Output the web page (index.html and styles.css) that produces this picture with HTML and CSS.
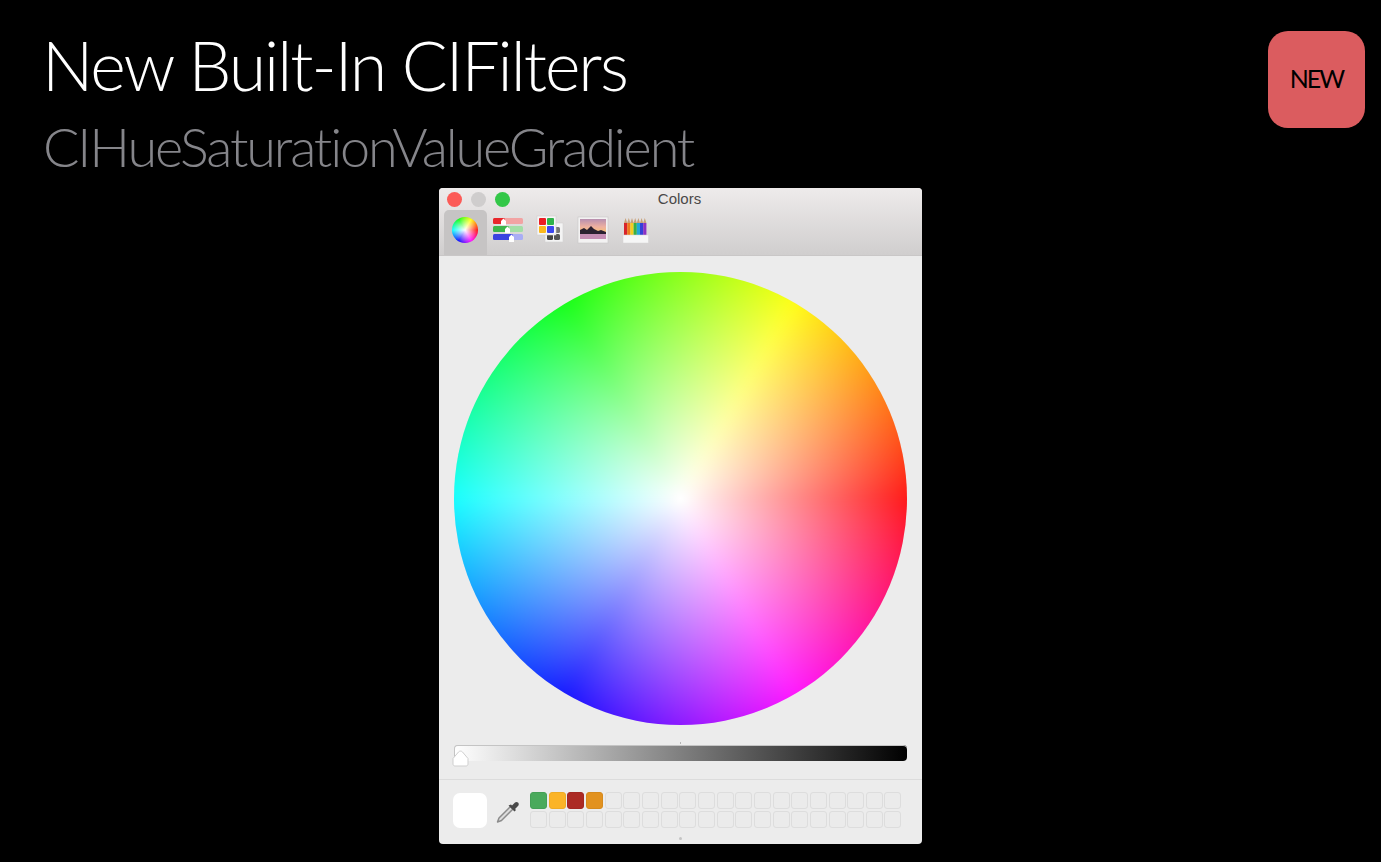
FILE: index.html
```html
<!DOCTYPE html>
<html lang="en">
<head>
    <meta charset="UTF-8">
    <meta name="viewport" content="width=device-width, initial-scale=1.0">
    <title>New Built-In CIFilters</title>
    <link rel="stylesheet" href="styles.css">
</head>
<body>
    <header class="slide-head">
        <div class="titles">
            <h1>New Built-In CIFilters</h1>
            <h2>CIHueSaturationValueGradient</h2>
        </div>
        <div class="badge">NEW</div>
    </header>

    <div class="window">
        <div class="chrome">
            <div class="titlebar">
                <span class="light red"></span>
                <span class="light grey"></span>
                <span class="light green"></span>
                <span class="win-title">Colors</span>
            </div>
            <div class="toolbar">
                <div class="tool active"><div class="mini-wheel"></div></div>
                <div class="tool">
                    <svg width="32" height="26" viewBox="0 0 32 26">
                        <rect x="1" y="1" width="30" height="6" rx="1.5" fill="#f2a3a3"/>
                        <rect x="1" y="1" width="12" height="6" rx="1.5" fill="#e8262b"/>
                        <rect x="1" y="9" width="30" height="6" rx="1.5" fill="#a3dfa6"/>
                        <rect x="1" y="9" width="16" height="6" rx="1.5" fill="#3cb64b"/>
                        <rect x="1" y="17" width="30" height="6" rx="1.5" fill="#a9adf5"/>
                        <rect x="1" y="17" width="20" height="6" rx="1.5" fill="#3b43e0"/>
                        <path d="M9 4l2.500-2.500L14 4v4H9zM13 12l2.500-2.500L18 12v4h-5zM17 20l2.500-2.500L22 20v5h-5z" fill="#fff"/>
                    </svg>
                </div>
                <div class="tool">
                    <svg width="30" height="30" viewBox="0 0 30 30">
                        <rect x="9" y="8" width="18" height="19" fill="#f4f4f4" stroke="#d4d2d2" stroke-width=".6"/>
                        <rect x="11" y="19" width="6" height="6" rx="1.5" fill="#444"/>
                        <rect x="18" y="19" width="6" height="6" rx="1.5" fill="#555"/>
                        <rect x="18" y="12" width="6" height="6" rx="1.5" fill="#777"/>
                        <rect x="1" y="1" width="19" height="19" fill="#f6f6f6" stroke="#d0cece" stroke-width=".6"/>
                        <rect x="3" y="3" width="7" height="7" rx="1" fill="#ea1c24"/>
                        <rect x="11" y="3" width="7" height="7" rx="1" fill="#2fb24a"/>
                        <rect x="3" y="11" width="7" height="7" rx="1" fill="#fbb81c"/>
                        <rect x="11" y="11" width="7" height="7" rx="1" fill="#3c47ee"/>
                    </svg>
                </div>
                <div class="tool">
                    <svg width="32" height="28" viewBox="0 0 32 28">
                        <defs>
                            <linearGradient id="sky" x1="0" y1="0" x2="0" y2="1">
                                <stop offset="0" stop-color="#b78fb0"/>
                                <stop offset=".6" stop-color="#eeb0a0"/>
                                <stop offset="1" stop-color="#f4c07a"/>
                            </linearGradient>
                        </defs>
                        <rect x="1" y="1" width="30" height="26" fill="#f3f2f2" stroke="#c8c6c6" stroke-width=".6"/>
                        <rect x="3" y="3" width="26" height="13" fill="url(#sky)"/>
                        <rect x="3" y="16" width="26" height="7" fill="#c58db4"/>
                        <path d="M3 18v-4l4-2 3 2 4-4 3 3 4 2 3-1 5 2v2z" fill="#2b2030"/>
                    </svg>
                </div>
                <div class="tool">
                    <svg width="28" height="28" viewBox="0 0 28 28">
                        <rect x="2" y="7" width="3.2" height="12" fill="#d8242a"/>
                        <rect x="5.2" y="7" width="3.2" height="12" fill="#ee7a1c"/>
                        <rect x="8.4" y="7" width="3.2" height="12" fill="#f4cd20"/>
                        <rect x="11.6" y="7" width="3.2" height="12" fill="#38b044"/>
                        <rect x="14.8" y="7" width="3.2" height="12" fill="#20a8d8"/>
                        <rect x="18" y="7" width="3.2" height="12" fill="#3440d8"/>
                        <rect x="21.2" y="7" width="3.2" height="12" fill="#8c30c4"/>
                        <path d="M2 7l1.600-5 1.600 5zM5.200 7l1.600-5 1.600 5zM8.400 7L10 2l1.600 5zM11.600 7l1.600-5 1.600 5zM14.800 7l1.600-5L18 7zM18 7l1.600-5 1.600 5zM21.200 7l1.600-5 1.600 5z" fill="#c8a078"/>
                        <rect x="1" y="19" width="25.500" height="8" fill="#f6f6f6" stroke="#d6d4d4" stroke-width=".5"/>
                    </svg>
                </div>
            </div>
        </div>

        <div class="wheel-area">
            <div class="wheel"></div>
            <div class="slider-wrap">
                <div class="slider-tick"></div>
                <div class="slider"></div>
                <svg class="thumb" width="17" height="17" viewBox="0 0 17 17">
                    <path d="M1 8.500L6.500 2c1-1.200 3-1.200 4 0L16 8.500V14c0 1.200-.8 2-2 2H3c-1.200 0-2-.8-2-2z" fill="#fff" stroke="#cfcfcf"/>
                </svg>
            </div>
        </div>

        <div class="tray">
            <div class="current"></div>
            <svg class="dropper" width="24" height="24" viewBox="0 0 24 24">
                <path d="M14.500 6.500L3 18l-1.500 4 4-1.500L17 9z" fill="#dcdcdc" stroke="#8c8c8c" stroke-width="1.500" stroke-linejoin="round"/>
                <path d="M12.500 5.500l6 6 1.500-1.500-1-1 3-3c1-1 1-2.700 0-3.500s-2.200-.8-3 0l-3 3-1-1z" fill="#4a4a4a"/>
            </svg>
            <div class="swatches">
                <div class="swatch s-green"></div><div class="swatch s-yellow"></div><div class="swatch s-red"></div><div class="swatch s-orange"></div>
                <div class="swatch"></div><div class="swatch"></div><div class="swatch"></div><div class="swatch"></div>
                <div class="swatch"></div><div class="swatch"></div><div class="swatch"></div><div class="swatch"></div>
                <div class="swatch"></div><div class="swatch"></div><div class="swatch"></div><div class="swatch"></div>
                <div class="swatch"></div><div class="swatch"></div><div class="swatch"></div><div class="swatch"></div>
                <div class="swatch"></div><div class="swatch"></div><div class="swatch"></div><div class="swatch"></div>
                <div class="swatch"></div><div class="swatch"></div><div class="swatch"></div><div class="swatch"></div>
                <div class="swatch"></div><div class="swatch"></div><div class="swatch"></div><div class="swatch"></div>
                <div class="swatch"></div><div class="swatch"></div><div class="swatch"></div><div class="swatch"></div>
                <div class="swatch"></div><div class="swatch"></div><div class="swatch"></div><div class="swatch"></div>
            </div>
            <div class="grip"></div>
        </div>
    </div>
</body>
</html>
```

FILE: styles.css
```css
html, body {
    height: 100%;
}
body {
    margin: 0;
    background: #000;
    overflow: hidden;
    font-family: Lato, "Open Sans", Arial, sans-serif;
}

/* slide heading */
.slide-head {
    display: flex;
    justify-content: space-between;
    height: 188px;
    padding: 0 16px 0 42px;
    box-sizing: border-box;
}
h1 {
    margin: 24px 0 0;
    font-size: 68px;
    font-weight: 300;
    line-height: 82px;
    letter-spacing: -2px;
    color: #fff;
}
h2 {
    margin: 9px 0 0;
    padding-left: 1px;
    font-size: 54px;
    font-weight: 300;
    line-height: 64px;
    letter-spacing: -2.15px;
    color: #85858a;
}
.badge {
    display: flex;
    align-items: center;
    justify-content: center;
    width: 97px;
    height: 97px;
    margin-top: 31px;
    padding-bottom: 3px;
    box-sizing: border-box;
    border-radius: 20px;
    background: #db5c5f;
    color: #000;
    font-size: 25px;
    letter-spacing: -2px;
}

/* colors window */
.window {
    width: 483px;
    height: 656px;
    margin-left: 439px;
    border-radius: 4px;
    background: #ececec;
    overflow: hidden;
}
.chrome {
    height: 68px;
    background: linear-gradient(#eeebeb, #d0cece);
    border-bottom: 1px solid #c9c7c7;
    box-sizing: border-box;
}
.titlebar {
    position: relative;
    display: flex;
    align-items: center;
    gap: 9px;
    height: 22px;
    padding-left: 8px;
}
.light {
    width: 15px;
    height: 15px;
    border-radius: 50%;
}
.red { background: #fc5b57; }
.grey { background: #cfcdcd; }
.green { background: #33c748; }
.win-title {
    position: absolute;
    top: 2px;
    left: 0;
    right: 2px;
    text-align: center;
    font-family: "Liberation Sans", Arial, sans-serif;
    font-size: 15px;
    line-height: 18px;
    color: #4a4848;
}
.toolbar {
    display: flex;
    height: 45px;
    padding-left: 5px;
}
.tool {
    display: flex;
    align-items: center;
    justify-content: center;
    flex: 0 0 42.7px;
    padding-bottom: 5px;
    box-sizing: border-box;
    filter: blur(0.4px);
}
.tool.active {
    background: #c6c4c4;
    border-radius: 5px 5px 0 0;
    filter: none;
}
.mini-wheel {
    width: 26px;
    height: 26px;
    border-radius: 50%;
    background:
        radial-gradient(circle closest-side, #fff, rgba(255,255,255,.05)),
        conic-gradient(from -30deg, #00ff00 0deg, #ffff00 60deg, #ff0000 120deg, #ff00ff 180deg, #0000ff 240deg, #00ffff 300deg, #00ff00 360deg);
}

.wheel-area {
    position: relative;
    height: 524px;
    padding: 16px 15px 0;
    box-sizing: border-box;
    border-bottom: 1px solid #dcdcdc;
}
/* hues sit 60deg apart with yellow at 30deg; the hue layer is blurred so
   the rays soften, and the white layer fades out towards the rim */
.wheel {
    position: relative;
    width: 453px;
    height: 453px;
    border-radius: 50%;
    overflow: hidden;
}
.wheel::before {
    content: "";
    position: absolute;
    inset: -30px;
    background: conic-gradient(from -30deg, #00ff00 0deg, #ffff00 60deg, #ff0000 120deg, #ff00ff 180deg, #0000ff 240deg, #00ffff 300deg, #00ff00 360deg);
    filter: blur(7px);
}
.wheel::after {
    content: "";
    position: absolute;
    inset: 0;
    background: radial-gradient(circle closest-side, #fff, rgba(255,255,255,.1));
}
.slider-wrap {
    position: relative;
    margin-top: 20px;
}
.slider-tick {
    position: absolute;
    left: 226px;
    top: -3px;
    width: 1px;
    height: 2px;
    background: #b5b5b5;
}
.slider {
    height: 16px;
    border-radius: 4px;
    box-shadow: inset 0 1px 0 #c4c4c4, inset 1px 0 0 #c4c4c4;
    background: linear-gradient(to right, #fff, #000);
}
.thumb {
    position: absolute;
    left: -2px;
    top: 5px;
}

.tray {
    position: relative;
    display: flex;
    align-items: flex-start;
    height: 64px;
    padding: 12px 0 0 14px;
    box-sizing: border-box;
}
.current {
    width: 34px;
    height: 35px;
    margin-top: 1px;
    border-radius: 7px;
    background: #fff;
}
.dropper {
    margin: 8px 10px 0 9px;
}
.swatches {
    display: grid;
    grid-template-columns: repeat(20, 17px);
    grid-auto-rows: 17px;
    column-gap: 1.67px;
    row-gap: 2px;
}
.swatch {
    border-radius: 3px;
    border: 1px solid #dddddd;
    background: #ebebeb;
    box-sizing: border-box;
}
.s-green { background: #4aaa5c; border-color: #45a057; }
.s-yellow { background: #fbb427; border-color: #efab25; }
.s-red { background: #ac2a24; border-color: #a32822; }
.s-orange { background: #e2921f; border-color: #d68a1d; }
.grip {
    position: absolute;
    left: 240px;
    bottom: 4px;
    width: 3px;
    height: 3px;
    border-radius: 50%;
    background: #c4c4c4;
}
```
